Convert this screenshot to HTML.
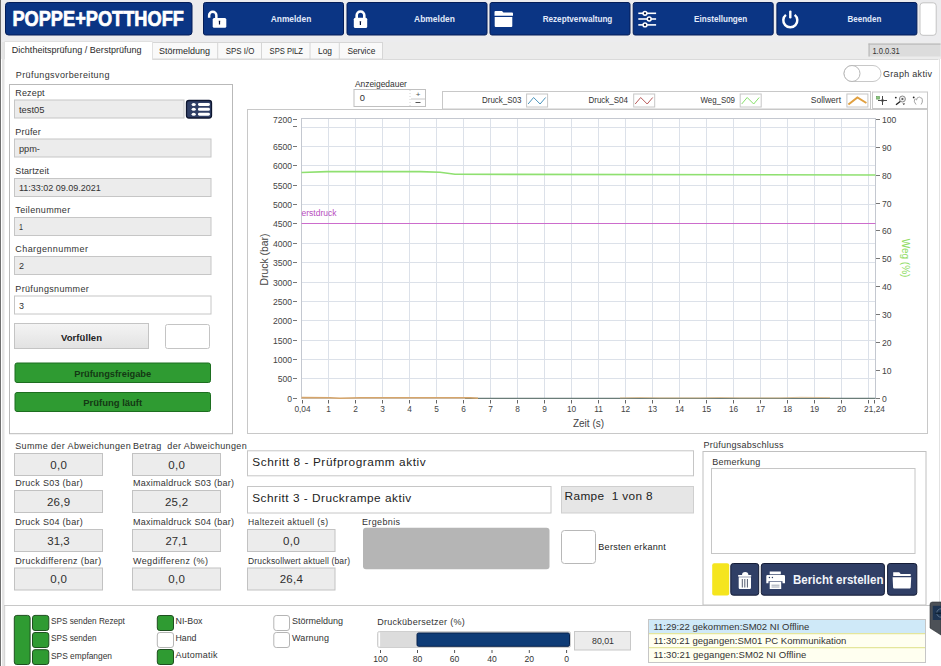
<!DOCTYPE html><html><head><meta charset="utf-8"><style>html,body{margin:0;padding:0;background:#fff;overflow:hidden}svg{display:block;font-family:"Liberation Sans",sans-serif}</style></head><body>
<svg width="941" height="666" viewBox="0 0 941 666">
<rect x="0" y="0" width="941" height="666" fill="#ffffff" />
<rect x="0" y="0" width="941" height="42" fill="#ececee" />
<rect x="0" y="42" width="941" height="17" fill="#ececec" />
<rect x="0" y="0" width="1" height="666" fill="#6f6f6f" />
<rect x="2" y="42" width="2.5" height="624" fill="#e4e4e4" />
<rect x="939" y="59" width="1" height="546" fill="#e2e2e2" />
<rect x="5.5" y="2.5" width="186.5" height="32.5" fill="#0b3584" stroke="#041d58" stroke-width="1" rx="3" />
<text x="12.4" y="26.3" font-size="21.5" fill="#ffffff" font-weight="bold" textLength="171.5" lengthAdjust="spacingAndGlyphs" stroke="#fff" stroke-width="0.7">POPPE+POTTHOFF</text>
<rect x="203.5" y="2.5" width="140" height="32.5" fill="#0b3584" stroke="#041d58" stroke-width="1" rx="2" />
<text x="291.0" y="21.5" font-size="9.6" fill="#e2eafa" font-weight="bold" text-anchor="middle" textLength="40.6" lengthAdjust="spacingAndGlyphs" >Anmelden</text>
<rect x="347.0" y="2.5" width="140" height="32.5" fill="#0b3584" stroke="#041d58" stroke-width="1" rx="2" />
<text x="434.5" y="21.5" font-size="9.6" fill="#e2eafa" font-weight="bold" text-anchor="middle" textLength="40.8" lengthAdjust="spacingAndGlyphs" >Abmelden</text>
<rect x="490.0" y="2.5" width="140" height="32.5" fill="#0b3584" stroke="#041d58" stroke-width="1" rx="2" />
<text x="577.5" y="21.5" font-size="9.6" fill="#e2eafa" font-weight="bold" text-anchor="middle" textLength="69.7" lengthAdjust="spacingAndGlyphs" >Rezeptverwaltung</text>
<rect x="633.2" y="2.5" width="140" height="32.5" fill="#0b3584" stroke="#041d58" stroke-width="1" rx="2" />
<text x="720.7" y="21.5" font-size="9.6" fill="#e2eafa" font-weight="bold" text-anchor="middle" textLength="53.2" lengthAdjust="spacingAndGlyphs" >Einstellungen</text>
<rect x="776.9" y="2.5" width="140" height="32.5" fill="#0b3584" stroke="#041d58" stroke-width="1" rx="2" />
<text x="864.4" y="21.5" font-size="9.6" fill="#e2eafa" font-weight="bold" text-anchor="middle" textLength="33.8" lengthAdjust="spacingAndGlyphs" >Beenden</text>
<path d="M209.15 17.8 V15.35 a3.6 3.6 0 0 1 7.2 0 V18.5" fill="none" stroke="#fff" stroke-width="2.5"/>
<rect x="212.7" y="18" width="13.6" height="9.7" fill="#ffffff" rx="1.5" />
<path d="M218.7 20.8 h1.6 l-0.2 1.4 v2.3 h-1.2 v-2.3 z" fill="#02103a"/>
<path d="M356.7 18.5 V15.3 a3.8 3.8 0 0 1 7.6 0 V18.5" fill="none" stroke="#fff" stroke-width="2.6"/>
<rect x="353.8" y="17.8" width="13.4" height="10.3" fill="#ffffff" rx="1.5" />
<path d="M359.6 21.3 h1.6 l-0.2 1.4 v2.2 h-1.2 v-2.2 z" fill="#02103a"/>
<path d="M495.5 11 h6.5 l1.4 1.5 h8.6 a1 1 0 0 1 1 1 v2.2 h-18.5 v-3.7 a1 1 0 0 1 1 -1 z" fill="#fff"/>
<path d="M494.7 17 h17.6 v9 a1 1 0 0 1 -1 1 h-15.6 a1 1 0 0 1 -1 -1 z" fill="#fff"/>
<line x1="638.3" y1="13.3" x2="656.1" y2="13.3" stroke="#fff" stroke-width="1.6" />
<circle cx="645" cy="13.3" r="1.9" fill="#02103a" stroke="#fff" stroke-width="1.5"/>
<line x1="638.3" y1="19.0" x2="656.1" y2="19.0" stroke="#fff" stroke-width="1.6" />
<circle cx="649.2" cy="19.0" r="1.9" fill="#02103a" stroke="#fff" stroke-width="1.5"/>
<line x1="638.3" y1="24.9" x2="656.1" y2="24.9" stroke="#fff" stroke-width="1.6" />
<circle cx="645" cy="24.9" r="1.9" fill="#02103a" stroke="#fff" stroke-width="1.5"/>
<path d="M785.9 14.9 a7 7 0 1 0 8.8 0" fill="none" stroke="#fff" stroke-width="2.5" stroke-linecap="butt"/>
<line x1="790.3" y1="11.6" x2="790.3" y2="17.2" stroke="#fff" stroke-width="2.4" stroke-linecap="round"/>
<rect x="920" y="2.8" width="16.2" height="32.5" fill="#ffffff" stroke="#c4c4c4" stroke-width="1" rx="3" />
<rect x="152.5" y="42.5" width="230" height="16.5" fill="#f9f9f9" stroke="#d6d6d6" stroke-width="1" />
<line x1="217.7" y1="43" x2="217.7" y2="59" stroke="#d6d6d6" stroke-width="1" />
<line x1="261.5" y1="43" x2="261.5" y2="59" stroke="#d6d6d6" stroke-width="1" />
<line x1="310" y1="43" x2="310" y2="59" stroke="#d6d6d6" stroke-width="1" />
<line x1="339.3" y1="43" x2="339.3" y2="59" stroke="#d6d6d6" stroke-width="1" />
<path d="M4.5 59.5 V41.5 H152.5 V59.5" fill="#ffffff" stroke="#e0e0e0" stroke-width="1"/>
<line x1="152.5" y1="59.5" x2="938.5" y2="59.5" stroke="#dadada" stroke-width="1" />
<text x="11.8" y="52.7" font-size="9" fill="#2a2a2a" textLength="129.8" lengthAdjust="spacing" >Dichtheitsprüfung / Berstprüfung</text>
<text x="159.1" y="54" font-size="9" fill="#2a2a2a" textLength="51" lengthAdjust="spacingAndGlyphs" >Störmeldung</text>
<text x="225.8" y="54" font-size="9" fill="#2a2a2a" textLength="28.6" lengthAdjust="spacingAndGlyphs" >SPS I/O</text>
<text x="269.6" y="54" font-size="9" fill="#2a2a2a" textLength="33.4" lengthAdjust="spacingAndGlyphs" >SPS PILZ</text>
<text x="318" y="54" font-size="9" fill="#2a2a2a" textLength="14" lengthAdjust="spacingAndGlyphs" >Log</text>
<text x="347.4" y="54" font-size="9" fill="#2a2a2a" textLength="27.9" lengthAdjust="spacingAndGlyphs" >Service</text>
<rect x="868.5" y="43.5" width="72" height="13" fill="#dcdcdc" />
<rect x="868.5" y="43.5" width="72" height="1.2" fill="#b9b9b9" />
<rect x="868.5" y="43.5" width="1.2" height="13" fill="#b9b9b9" />
<text x="872.4" y="54" font-size="9" fill="#333" textLength="27.4" lengthAdjust="spacingAndGlyphs" >1.0.0.31</text>
<text x="15.8" y="77.8" font-size="9" fill="#333" textLength="93.6" lengthAdjust="spacing" >Prüfungsvorbereitung</text>
<rect x="9.5" y="84.5" width="223" height="349.2" fill="#ffffff" stroke="#b9b9b9" stroke-width="1" />
<text x="15.3" y="95.5" font-size="9" fill="#333" textLength="29.3" lengthAdjust="spacing" >Rezept</text>
<rect x="14.5" y="100.0" width="169.5" height="18" fill="#ececec" stroke="#c6c6c6" stroke-width="1" />
<text x="18.9" y="112.7" font-size="9.6" fill="#333" textLength="25.5" lengthAdjust="spacingAndGlyphs" >test05</text>
<text x="15.3" y="134.5" font-size="9" fill="#333" textLength="25.5" lengthAdjust="spacing" >Prüfer</text>
<rect x="14.5" y="139.0" width="196.5" height="18" fill="#ececec" stroke="#c6c6c6" stroke-width="1" />
<text x="18.9" y="151.7" font-size="9.6" fill="#333" textLength="21" lengthAdjust="spacingAndGlyphs" >ppm-</text>
<text x="15.3" y="174" font-size="9" fill="#333" textLength="33.7" lengthAdjust="spacing" >Startzeit</text>
<rect x="14.5" y="178.5" width="196.5" height="18" fill="#ececec" stroke="#c6c6c6" stroke-width="1" />
<text x="18.9" y="191.2" font-size="9.6" fill="#333" textLength="82" lengthAdjust="spacingAndGlyphs" >11:33:02 09.09.2021</text>
<text x="15.3" y="213" font-size="9" fill="#333" textLength="54.9" lengthAdjust="spacing" >Teilenummer</text>
<rect x="14.5" y="217.5" width="196.5" height="18" fill="#ececec" stroke="#c6c6c6" stroke-width="1" />
<text x="18.9" y="230.2" font-size="9.6" fill="#333" textLength="4" lengthAdjust="spacingAndGlyphs" >1</text>
<text x="15.3" y="252" font-size="9" fill="#333" textLength="72.6" lengthAdjust="spacing" >Chargennummer</text>
<rect x="14.5" y="256.5" width="196.5" height="18" fill="#ececec" stroke="#c6c6c6" stroke-width="1" />
<text x="18.9" y="269.2" font-size="9.6" fill="#333" textLength="5" lengthAdjust="spacingAndGlyphs" >2</text>
<text x="15.3" y="291.5" font-size="9" fill="#333" textLength="73.5" lengthAdjust="spacing" >Prüfungsnummer</text>
<rect x="14.5" y="296.0" width="196.5" height="18" fill="#ffffff" stroke="#c6c6c6" stroke-width="1" />
<text x="18.9" y="308.7" font-size="9.6" fill="#333" textLength="5" lengthAdjust="spacingAndGlyphs" >3</text>
<rect x="186.5" y="100.5" width="25" height="17.5" fill="#303f66" stroke="#0e1630" stroke-width="1.3" rx="2.5" />
<ellipse cx="193.7" cy="104.4" rx="2.1" ry="1.5" fill="#fff"/>
<rect x="198" y="102.9" width="11.9" height="3" fill="#ffffff" rx="1.4" />
<ellipse cx="193.7" cy="109.3" rx="2.1" ry="1.5" fill="#fff"/>
<rect x="198" y="107.8" width="11.9" height="3" fill="#ffffff" rx="1.4" />
<ellipse cx="193.7" cy="114.2" rx="2.1" ry="1.5" fill="#fff"/>
<rect x="198" y="112.7" width="11.9" height="3" fill="#ffffff" rx="1.4" />
<defs><linearGradient id="gv" x1="0" y1="0" x2="0" y2="1"><stop offset="0" stop-color="#f4f4f4"/><stop offset="1" stop-color="#e2e2e2"/></linearGradient></defs>
<rect x="14.5" y="323.5" width="134" height="25" fill="url(#gv)" stroke="#c4c4c4" stroke-width="1" />
<text x="81.5" y="340.5" font-size="9.5" fill="#222" font-weight="bold" text-anchor="middle" textLength="41" lengthAdjust="spacing" >Vorfüllen</text>
<rect x="165.5" y="324.5" width="44" height="24" fill="#ffffff" stroke="#c4c4c4" stroke-width="1" rx="2" />
<rect x="15" y="363" width="195.5" height="19.5" fill="#2f9b32" stroke="#1d6e20" stroke-width="1" rx="2" />
<text x="112.7" y="376.6" font-size="9.5" fill="#143814" font-weight="bold" text-anchor="middle" textLength="77" lengthAdjust="spacingAndGlyphs" >Prüfungsfreigabe</text>
<rect x="15" y="392.5" width="195.5" height="19" fill="#2f9b32" stroke="#1d6e20" stroke-width="1" rx="2" />
<text x="112.7" y="405.8" font-size="9.5" fill="#143814" font-weight="bold" text-anchor="middle" textLength="59" lengthAdjust="spacingAndGlyphs" >Prüfung läuft</text>
<text x="354.9" y="87.3" font-size="9" fill="#333" textLength="52" lengthAdjust="spacingAndGlyphs" >Anzeigedauer</text>
<rect x="354" y="89.5" width="71.5" height="17" fill="#ffffff" stroke="#c0c0c0" stroke-width="1" />
<line x1="410" y1="90" x2="410" y2="106.5" stroke="#d0d0d0" stroke-width="1" stroke-dasharray="1 2"/>
<line x1="411" y1="99" x2="425" y2="99" stroke="#c8c8c8" stroke-width="1" />
<text x="359.8" y="101.3" font-size="9.3" fill="#333" >0</text>
<text x="418" y="97" font-size="8" fill="#555" text-anchor="middle" >+</text>
<line x1="415.5" y1="102.5" x2="420.5" y2="102.5" stroke="#555" stroke-width="1" />
<rect x="442.5" y="91.5" width="428" height="17.5" fill="#ffffff" stroke="#c8c8c8" stroke-width="1" />
<text x="482" y="103.3" font-size="9" fill="#333" textLength="39.4" lengthAdjust="spacingAndGlyphs" >Druck_S03</text>
<rect x="526.6" y="94" width="21" height="13" fill="#ffffff" stroke="#c6c6c6" stroke-width="1" />
<polyline points="528.1,104 533.6,97.5 540.1,104 545.6,97.5" fill="none" stroke="#4a94bc" stroke-width="1"/>
<text x="588.5" y="103.3" font-size="9" fill="#333" textLength="39.5" lengthAdjust="spacingAndGlyphs" >Druck_S04</text>
<rect x="633.7" y="94" width="21" height="13" fill="#ffffff" stroke="#c6c6c6" stroke-width="1" />
<polyline points="635.2,104 640.7,97.5 647.2,104 652.7,97.5" fill="none" stroke="#b85a5a" stroke-width="1"/>
<text x="700.5" y="103.3" font-size="9" fill="#333" textLength="34.5" lengthAdjust="spacingAndGlyphs" >Weg_S09</text>
<rect x="740.2" y="94" width="21" height="13" fill="#ffffff" stroke="#c6c6c6" stroke-width="1" />
<polyline points="741.7,104 747.2,97.5 753.7,104 759.2,97.5" fill="none" stroke="#86e06a" stroke-width="1"/>
<text x="810.8" y="103.3" font-size="9" fill="#333" textLength="30.2" lengthAdjust="spacingAndGlyphs" >Sollwert</text>
<rect x="846.9" y="94" width="21" height="13" fill="#ffffff" stroke="#c6c6c6" stroke-width="1" />
<polyline points="848.4,104.5 857.4,97.5 866.4,103" fill="none" stroke="#e0a040" stroke-width="2"/>
<rect x="872.5" y="92" width="55" height="16.5" fill="#ffffff" stroke="#c8c8c8" stroke-width="1" />
<rect x="876.5" y="96.5" width="3" height="2.6" fill="#8cc67e" stroke="#5a9a50" stroke-width="0.6" />
<line x1="878" y1="100.5" x2="887" y2="100.5" stroke="#333" stroke-width="0.9" />
<line x1="882.5" y1="96" x2="882.5" y2="105" stroke="#333" stroke-width="0.9" />
<rect x="881.7" y="99.7" width="1.6" height="1.6" fill="#ffffff" stroke="#333" stroke-width="0.6" />
<circle cx="902.4" cy="99" r="3" fill="#eee" stroke="#888" stroke-width="1"/><circle cx="902.4" cy="99" r="1.1" fill="#555"/><line x1="900.2" y1="101.4" x2="896" y2="104.8" stroke="#222" stroke-width="1.3"/><circle cx="895.8" cy="97.6" r="0.9" fill="#222"/><path d="M902.5 103.5 h2.6 l-1.3 1.6z" fill="#222"/>
<path d="M916 104.5 q-2.5 -3 -1.5 -5 q1 -1 2 0.5 q0.5 -3 2 -2.6 q1.2 -0.8 2.2 0.4 q1.4 0 1.6 1.5 q0.6 3 -1.2 5.2" fill="none" stroke="#999" stroke-width="0.9"/><circle cx="913.7" cy="97.4" r="0.9" fill="#222"/>
<rect x="844" y="65.5" width="37" height="16" fill="#ffffff" stroke="#c8c8c8" stroke-width="1" rx="8" />
<circle cx="852" cy="73.5" r="8" fill="#ffffff" stroke="#b8b8b8" stroke-width="1"/>
<text x="883" y="77.3" font-size="9" fill="#333" textLength="49" lengthAdjust="spacing" >Graph aktiv</text>
<rect x="247.5" y="109.5" width="680" height="324" fill="#ffffff" stroke="#c8c8c8" stroke-width="1" />
<line x1="301.5" y1="378.5" x2="875.5" y2="378.5" stroke="#dce1e9" stroke-width="1" />
<line x1="301.5" y1="359.5" x2="875.5" y2="359.5" stroke="#dce1e9" stroke-width="1" />
<line x1="301.5" y1="340.5" x2="875.5" y2="340.5" stroke="#dce1e9" stroke-width="1" />
<line x1="301.5" y1="320.5" x2="875.5" y2="320.5" stroke="#dce1e9" stroke-width="1" />
<line x1="301.5" y1="301.5" x2="875.5" y2="301.5" stroke="#dce1e9" stroke-width="1" />
<line x1="301.5" y1="282.5" x2="875.5" y2="282.5" stroke="#dce1e9" stroke-width="1" />
<line x1="301.5" y1="262.5" x2="875.5" y2="262.5" stroke="#dce1e9" stroke-width="1" />
<line x1="301.5" y1="243.5" x2="875.5" y2="243.5" stroke="#dce1e9" stroke-width="1" />
<line x1="301.5" y1="223.5" x2="875.5" y2="223.5" stroke="#dce1e9" stroke-width="1" />
<line x1="301.5" y1="204.5" x2="875.5" y2="204.5" stroke="#dce1e9" stroke-width="1" />
<line x1="301.5" y1="185.5" x2="875.5" y2="185.5" stroke="#dce1e9" stroke-width="1" />
<line x1="301.5" y1="165.5" x2="875.5" y2="165.5" stroke="#dce1e9" stroke-width="1" />
<line x1="301.5" y1="146.5" x2="875.5" y2="146.5" stroke="#dce1e9" stroke-width="1" />
<line x1="301.5" y1="127.5" x2="875.5" y2="127.5" stroke="#dce1e9" stroke-width="1" />
<line x1="328.5" y1="118.5" x2="328.5" y2="398.5" stroke="#dce1e9" stroke-width="1" />
<line x1="355.5" y1="118.5" x2="355.5" y2="398.5" stroke="#dce1e9" stroke-width="1" />
<line x1="382.5" y1="118.5" x2="382.5" y2="398.5" stroke="#dce1e9" stroke-width="1" />
<line x1="409.5" y1="118.5" x2="409.5" y2="398.5" stroke="#dce1e9" stroke-width="1" />
<line x1="436.5" y1="118.5" x2="436.5" y2="398.5" stroke="#dce1e9" stroke-width="1" />
<line x1="463.5" y1="118.5" x2="463.5" y2="398.5" stroke="#dce1e9" stroke-width="1" />
<line x1="490.5" y1="118.5" x2="490.5" y2="398.5" stroke="#dce1e9" stroke-width="1" />
<line x1="517.5" y1="118.5" x2="517.5" y2="398.5" stroke="#dce1e9" stroke-width="1" />
<line x1="544.5" y1="118.5" x2="544.5" y2="398.5" stroke="#dce1e9" stroke-width="1" />
<line x1="571.5" y1="118.5" x2="571.5" y2="398.5" stroke="#dce1e9" stroke-width="1" />
<line x1="598.5" y1="118.5" x2="598.5" y2="398.5" stroke="#dce1e9" stroke-width="1" />
<line x1="625.5" y1="118.5" x2="625.5" y2="398.5" stroke="#dce1e9" stroke-width="1" />
<line x1="652.5" y1="118.5" x2="652.5" y2="398.5" stroke="#dce1e9" stroke-width="1" />
<line x1="679.5" y1="118.5" x2="679.5" y2="398.5" stroke="#dce1e9" stroke-width="1" />
<line x1="706.5" y1="118.5" x2="706.5" y2="398.5" stroke="#dce1e9" stroke-width="1" />
<line x1="733.5" y1="118.5" x2="733.5" y2="398.5" stroke="#dce1e9" stroke-width="1" />
<line x1="760.5" y1="118.5" x2="760.5" y2="398.5" stroke="#dce1e9" stroke-width="1" />
<line x1="787.5" y1="118.5" x2="787.5" y2="398.5" stroke="#dce1e9" stroke-width="1" />
<line x1="814.5" y1="118.5" x2="814.5" y2="398.5" stroke="#dce1e9" stroke-width="1" />
<line x1="841.5" y1="118.5" x2="841.5" y2="398.5" stroke="#dce1e9" stroke-width="1" />
<line x1="868.5" y1="118.5" x2="868.5" y2="398.5" stroke="#dce1e9" stroke-width="1" />
<rect x="301.5" y="118.5" width="574.0" height="280.0" fill="none" stroke="#c4c8d0" stroke-width="1" />
<line x1="293" y1="398.5" x2="297" y2="398.5" stroke="#777" stroke-width="1" />
<text x="292" y="401.5" font-size="8.6" fill="#444" text-anchor="end" >0</text>
<line x1="293" y1="378.5" x2="297" y2="378.5" stroke="#777" stroke-width="1" />
<text x="292" y="381.5" font-size="8.6" fill="#444" text-anchor="end" >500</text>
<line x1="293" y1="359.5" x2="297" y2="359.5" stroke="#777" stroke-width="1" />
<text x="292" y="362.5" font-size="8.6" fill="#444" text-anchor="end" >1000</text>
<line x1="293" y1="340.5" x2="297" y2="340.5" stroke="#777" stroke-width="1" />
<text x="292" y="343.5" font-size="8.6" fill="#444" text-anchor="end" >1500</text>
<line x1="293" y1="320.5" x2="297" y2="320.5" stroke="#777" stroke-width="1" />
<text x="292" y="323.5" font-size="8.6" fill="#444" text-anchor="end" >2000</text>
<line x1="293" y1="301.5" x2="297" y2="301.5" stroke="#777" stroke-width="1" />
<text x="292" y="304.5" font-size="8.6" fill="#444" text-anchor="end" >2500</text>
<line x1="293" y1="282.5" x2="297" y2="282.5" stroke="#777" stroke-width="1" />
<text x="292" y="285.5" font-size="8.6" fill="#444" text-anchor="end" >3000</text>
<line x1="293" y1="262.5" x2="297" y2="262.5" stroke="#777" stroke-width="1" />
<text x="292" y="265.5" font-size="8.6" fill="#444" text-anchor="end" >3500</text>
<line x1="293" y1="243.5" x2="297" y2="243.5" stroke="#777" stroke-width="1" />
<text x="292" y="246.5" font-size="8.6" fill="#444" text-anchor="end" >4000</text>
<line x1="293" y1="223.5" x2="297" y2="223.5" stroke="#777" stroke-width="1" />
<text x="292" y="226.5" font-size="8.6" fill="#444" text-anchor="end" >4500</text>
<line x1="293" y1="204.5" x2="297" y2="204.5" stroke="#777" stroke-width="1" />
<text x="292" y="207.5" font-size="8.6" fill="#444" text-anchor="end" >5000</text>
<line x1="293" y1="185.5" x2="297" y2="185.5" stroke="#777" stroke-width="1" />
<text x="292" y="188.5" font-size="8.6" fill="#444" text-anchor="end" >5500</text>
<line x1="293" y1="165.5" x2="297" y2="165.5" stroke="#777" stroke-width="1" />
<text x="292" y="168.5" font-size="8.6" fill="#444" text-anchor="end" >6000</text>
<line x1="293" y1="146.5" x2="297" y2="146.5" stroke="#777" stroke-width="1" />
<text x="292" y="149.5" font-size="8.6" fill="#444" text-anchor="end" >6500</text>
<line x1="293" y1="119.5" x2="297" y2="119.5" stroke="#777" stroke-width="1" />
<text x="292" y="122.5" font-size="8.6" fill="#444" text-anchor="end" >7200</text>
<line x1="293" y1="126.5" x2="297" y2="126.5" stroke="#777" stroke-width="1" />
<line x1="876" y1="398.5" x2="880" y2="398.5" stroke="#777" stroke-width="1" />
<text x="882" y="401.5" font-size="8.6" fill="#444" >0</text>
<line x1="876" y1="370.5" x2="880" y2="370.5" stroke="#777" stroke-width="1" />
<text x="882" y="373.5" font-size="8.6" fill="#444" >10</text>
<line x1="876" y1="342.5" x2="880" y2="342.5" stroke="#777" stroke-width="1" />
<text x="882" y="345.5" font-size="8.6" fill="#444" >20</text>
<line x1="876" y1="314.5" x2="880" y2="314.5" stroke="#777" stroke-width="1" />
<text x="882" y="317.5" font-size="8.6" fill="#444" >30</text>
<line x1="876" y1="286.5" x2="880" y2="286.5" stroke="#777" stroke-width="1" />
<text x="882" y="289.5" font-size="8.6" fill="#444" >40</text>
<line x1="876" y1="258.5" x2="880" y2="258.5" stroke="#777" stroke-width="1" />
<text x="882" y="261.5" font-size="8.6" fill="#444" >50</text>
<line x1="876" y1="230.5" x2="880" y2="230.5" stroke="#777" stroke-width="1" />
<text x="882" y="233.5" font-size="8.6" fill="#444" >60</text>
<line x1="876" y1="203.5" x2="880" y2="203.5" stroke="#777" stroke-width="1" />
<text x="882" y="206.5" font-size="8.6" fill="#444" >70</text>
<line x1="876" y1="175.5" x2="880" y2="175.5" stroke="#777" stroke-width="1" />
<text x="882" y="178.5" font-size="8.6" fill="#444" >80</text>
<line x1="876" y1="147.5" x2="880" y2="147.5" stroke="#777" stroke-width="1" />
<text x="882" y="150.5" font-size="8.6" fill="#444" >90</text>
<line x1="876" y1="119.5" x2="880" y2="119.5" stroke="#777" stroke-width="1" />
<text x="882" y="122.5" font-size="8.6" fill="#444" >100</text>
<line x1="302.5" y1="400" x2="302.5" y2="403.5" stroke="#666" stroke-width="1" />
<text x="302.5" y="412" font-size="8.3" fill="#444" text-anchor="middle" >0,04</text>
<line x1="328.5" y1="400" x2="328.5" y2="403.5" stroke="#666" stroke-width="1" />
<text x="328.5" y="412" font-size="8.3" fill="#444" text-anchor="middle" >1</text>
<line x1="355.5" y1="400" x2="355.5" y2="403.5" stroke="#666" stroke-width="1" />
<text x="355.5" y="412" font-size="8.3" fill="#444" text-anchor="middle" >2</text>
<line x1="382.5" y1="400" x2="382.5" y2="403.5" stroke="#666" stroke-width="1" />
<text x="382.5" y="412" font-size="8.3" fill="#444" text-anchor="middle" >3</text>
<line x1="409.5" y1="400" x2="409.5" y2="403.5" stroke="#666" stroke-width="1" />
<text x="409.5" y="412" font-size="8.3" fill="#444" text-anchor="middle" >4</text>
<line x1="436.5" y1="400" x2="436.5" y2="403.5" stroke="#666" stroke-width="1" />
<text x="436.5" y="412" font-size="8.3" fill="#444" text-anchor="middle" >5</text>
<line x1="463.5" y1="400" x2="463.5" y2="403.5" stroke="#666" stroke-width="1" />
<text x="463.5" y="412" font-size="8.3" fill="#444" text-anchor="middle" >6</text>
<line x1="490.5" y1="400" x2="490.5" y2="403.5" stroke="#666" stroke-width="1" />
<text x="490.5" y="412" font-size="8.3" fill="#444" text-anchor="middle" >7</text>
<line x1="517.5" y1="400" x2="517.5" y2="403.5" stroke="#666" stroke-width="1" />
<text x="517.5" y="412" font-size="8.3" fill="#444" text-anchor="middle" >8</text>
<line x1="544.5" y1="400" x2="544.5" y2="403.5" stroke="#666" stroke-width="1" />
<text x="544.5" y="412" font-size="8.3" fill="#444" text-anchor="middle" >9</text>
<line x1="571.5" y1="400" x2="571.5" y2="403.5" stroke="#666" stroke-width="1" />
<text x="571.5" y="412" font-size="8.3" fill="#444" text-anchor="middle" >10</text>
<line x1="598.5" y1="400" x2="598.5" y2="403.5" stroke="#666" stroke-width="1" />
<text x="598.5" y="412" font-size="8.3" fill="#444" text-anchor="middle" >11</text>
<line x1="625.5" y1="400" x2="625.5" y2="403.5" stroke="#666" stroke-width="1" />
<text x="625.5" y="412" font-size="8.3" fill="#444" text-anchor="middle" >12</text>
<line x1="652.5" y1="400" x2="652.5" y2="403.5" stroke="#666" stroke-width="1" />
<text x="652.5" y="412" font-size="8.3" fill="#444" text-anchor="middle" >13</text>
<line x1="679.5" y1="400" x2="679.5" y2="403.5" stroke="#666" stroke-width="1" />
<text x="679.5" y="412" font-size="8.3" fill="#444" text-anchor="middle" >14</text>
<line x1="706.5" y1="400" x2="706.5" y2="403.5" stroke="#666" stroke-width="1" />
<text x="706.5" y="412" font-size="8.3" fill="#444" text-anchor="middle" >15</text>
<line x1="733.5" y1="400" x2="733.5" y2="403.5" stroke="#666" stroke-width="1" />
<text x="733.5" y="412" font-size="8.3" fill="#444" text-anchor="middle" >16</text>
<line x1="760.5" y1="400" x2="760.5" y2="403.5" stroke="#666" stroke-width="1" />
<text x="760.5" y="412" font-size="8.3" fill="#444" text-anchor="middle" >17</text>
<line x1="787.5" y1="400" x2="787.5" y2="403.5" stroke="#666" stroke-width="1" />
<text x="787.5" y="412" font-size="8.3" fill="#444" text-anchor="middle" >18</text>
<line x1="814.5" y1="400" x2="814.5" y2="403.5" stroke="#666" stroke-width="1" />
<text x="814.5" y="412" font-size="8.3" fill="#444" text-anchor="middle" >19</text>
<line x1="841.5" y1="400" x2="841.5" y2="403.5" stroke="#666" stroke-width="1" />
<text x="841.5" y="412" font-size="8.3" fill="#444" text-anchor="middle" >20</text>
<line x1="868.5" y1="400" x2="868.5" y2="403.5" stroke="#666" stroke-width="1" />
<line x1="874.5" y1="400" x2="874.5" y2="403.5" stroke="#666" stroke-width="1" />
<text x="874.5" y="412" font-size="8.3" fill="#444" text-anchor="middle" >21,24</text>
<text x="588.5" y="427" font-size="10" fill="#444" text-anchor="middle" >Zeit (s)</text>
<text x="0" y="0" font-size="10.5" fill="#444" text-anchor="middle" textLength="52" lengthAdjust="spacingAndGlyphs" transform="translate(267.5,259.5) rotate(-90)">Druck (bar)</text>
<text x="0" y="0" font-size="10" fill="#8edc62" text-anchor="middle" transform="translate(902,258) rotate(90)">Weg (%)</text>
<polyline points="301.5,172.5 327,171.6 420,171.6 440,172.2 455,174.3 875.5,175" fill="none" stroke="#8fe070" stroke-width="1.6"/>
<line x1="301.5" y1="223.5" x2="875.5" y2="223.5" stroke="#cc6ccc" stroke-width="1" />
<text x="301.5" y="215.5" font-size="8.5" fill="#b84ec0" textLength="35" lengthAdjust="spacing" >erstdruck</text>
<line x1="465" y1="398.3" x2="875.5" y2="398.3" stroke="#6a7c78" stroke-width="1.3" />
<polyline points="301.5,397.6 330,397.8 340,398.3 360,397.8 470,397.8 478,398.3" fill="none" stroke="#d6a56a" stroke-width="1.6"/>
<polyline points="620,397.9 640,397.5 660,397.9 700,397.9 720,397.5 740,397.9 780,397.9 800,397.3 830,397.6" fill="none" stroke="#d9b27a" stroke-width="1" opacity="0.7"/>
<text x="15.2" y="449" font-size="9" fill="#333" textLength="115.5" lengthAdjust="spacing" >Summe der Abweichungen</text>
<text x="133" y="449" font-size="9" fill="#333" textLength="113.7" lengthAdjust="spacing" >Betrag  der Abweichungen</text>
<rect x="14.5" y="453.5" width="88" height="22" fill="#ececec" stroke="#c2c2c2" stroke-width="1" />
<text x="58.5" y="468.5" font-size="11.5" fill="#2e2e2e" text-anchor="middle" textLength="16.6" lengthAdjust="spacing" >0,0</text>
<rect x="132.5" y="453.5" width="88" height="22" fill="#ececec" stroke="#c2c2c2" stroke-width="1" />
<text x="176.5" y="468.5" font-size="11.5" fill="#2e2e2e" text-anchor="middle" textLength="16.6" lengthAdjust="spacing" >0,0</text>
<text x="15.2" y="486.3" font-size="9" fill="#333" textLength="67.5" lengthAdjust="spacing" >Druck S03 (bar)</text>
<text x="133" y="486.3" font-size="9" fill="#333" textLength="101" lengthAdjust="spacing" >Maximaldruck S03 (bar)</text>
<rect x="14.5" y="490.5" width="88" height="22" fill="#ececec" stroke="#c2c2c2" stroke-width="1" />
<text x="58.5" y="505.5" font-size="11.5" fill="#2e2e2e" text-anchor="middle" textLength="23.2" lengthAdjust="spacing" >26,9</text>
<rect x="132.5" y="490.5" width="88" height="22" fill="#ececec" stroke="#c2c2c2" stroke-width="1" />
<text x="176.5" y="505.5" font-size="11.5" fill="#2e2e2e" text-anchor="middle" textLength="23.2" lengthAdjust="spacing" >25,2</text>
<text x="15.2" y="525" font-size="9" fill="#333" textLength="67.5" lengthAdjust="spacing" >Druck S04 (bar)</text>
<text x="133" y="525" font-size="9" fill="#333" textLength="101" lengthAdjust="spacing" >Maximaldruck S04 (bar)</text>
<text x="248" y="525" font-size="8.5" fill="#333" textLength="80" lengthAdjust="spacing" >Haltezeit aktuell (s)</text>
<rect x="14.5" y="529.5" width="88" height="22" fill="#ececec" stroke="#c2c2c2" stroke-width="1" />
<text x="58.5" y="544.5" font-size="11.5" fill="#2e2e2e" text-anchor="middle" textLength="22.3" lengthAdjust="spacingAndGlyphs" >31,3</text>
<rect x="132.5" y="529.5" width="88" height="22" fill="#ececec" stroke="#c2c2c2" stroke-width="1" />
<text x="176.5" y="544.5" font-size="11.5" fill="#2e2e2e" text-anchor="middle" textLength="22" lengthAdjust="spacingAndGlyphs" >27,1</text>
<rect x="247.5" y="529.5" width="87.5" height="22" fill="#ececec" stroke="#c2c2c2" stroke-width="1" />
<text x="291.25" y="544.5" font-size="11.5" fill="#2e2e2e" text-anchor="middle" textLength="16.6" lengthAdjust="spacing" >0,0</text>
<text x="15.2" y="564" font-size="9" fill="#333" textLength="86" lengthAdjust="spacing" >Druckdifferenz (bar)</text>
<text x="133" y="564" font-size="9" fill="#333" textLength="75" lengthAdjust="spacing" >Wegdifferenz (%)</text>
<text x="248" y="564" font-size="8.5" fill="#333" textLength="102" lengthAdjust="spacing" >Drucksollwert aktuell (bar)</text>
<rect x="14.5" y="568.0" width="88" height="22.0" fill="#ececec" stroke="#c2c2c2" stroke-width="1" />
<text x="58.5" y="583.0" font-size="11.5" fill="#2e2e2e" text-anchor="middle" textLength="16.6" lengthAdjust="spacing" >0,0</text>
<rect x="132.5" y="568.0" width="88" height="22.0" fill="#ececec" stroke="#c2c2c2" stroke-width="1" />
<text x="176.5" y="583.0" font-size="11.5" fill="#2e2e2e" text-anchor="middle" textLength="16.6" lengthAdjust="spacing" >0,0</text>
<rect x="247.5" y="568.0" width="87.5" height="22.0" fill="#ececec" stroke="#c2c2c2" stroke-width="1" />
<text x="291.25" y="583.0" font-size="11.5" fill="#2e2e2e" text-anchor="middle" textLength="23.2" lengthAdjust="spacing" >26,4</text>
<rect x="247.5" y="450.8" width="446" height="25" fill="#ffffff" stroke="#c6c6c6" stroke-width="1" />
<text x="252.2" y="466" font-size="11.8" fill="#222" textLength="173.5" lengthAdjust="spacing" >Schritt 8 - Prüfprogramm aktiv</text>
<rect x="247.5" y="486.5" width="303.5" height="26.5" fill="#ffffff" stroke="#c6c6c6" stroke-width="1" />
<text x="252.2" y="501.7" font-size="11.8" fill="#222" textLength="159" lengthAdjust="spacing" >Schritt 3 - Druckrampe aktiv</text>
<rect x="561.5" y="486.5" width="132" height="26.5" fill="#e6e6e6" stroke="#cfcfcf" stroke-width="1" />
<text x="564.6" y="500.4" font-size="11.8" fill="#222" textLength="88" lengthAdjust="spacing" >Rampe  1 von 8</text>
<text x="362" y="525" font-size="9" fill="#333" textLength="38" lengthAdjust="spacing" >Ergebnis</text>
<rect x="363" y="527.8" width="186.5" height="41.5" fill="#b5b5b5" rx="3" />
<rect x="561.5" y="530.5" width="34" height="33" fill="#ffffff" stroke="#b8b8b8" stroke-width="1" rx="3" />
<text x="598.3" y="550.3" font-size="9" fill="#222" textLength="67.5" lengthAdjust="spacing" >Bersten erkannt</text>
<text x="703.5" y="448" font-size="9" fill="#333" textLength="80" lengthAdjust="spacing" >Prüfungsabschluss</text>
<rect x="703" y="451.5" width="223" height="153.5" fill="#ffffff" stroke="#c0c0c0" stroke-width="1" />
<text x="712.2" y="465" font-size="9" fill="#333" textLength="48" lengthAdjust="spacing" >Bemerkung</text>
<rect x="711.5" y="468.5" width="203.5" height="85" fill="#ffffff" stroke="#c6c6c6" stroke-width="1" />
<rect x="712.2" y="563.2" width="17" height="32.2" fill="#f5e51e" rx="2" />
<rect x="730.8" y="563.5" width="27.9" height="31.7" fill="#303f66" stroke="#141c36" stroke-width="1" rx="2.5" />
<rect x="761.3" y="563.5" width="123.1" height="31.7" fill="#303f66" stroke="#141c36" stroke-width="1" rx="2.5" />
<rect x="887.6" y="563.5" width="29.2" height="31.7" fill="#303f66" stroke="#141c36" stroke-width="1" rx="2.5" />
<path d="M742 575 a3.2 3 0 0 1 6.4 0 z" fill="#fff"/>
<rect x="738" y="574.9" width="13.3" height="1.8" fill="#ffffff" rx="0.8" />
<path d="M738.7 577.2 h12.3 v10.6 a1.2 1.2 0 0 1 -1.2 1.2 h-9.9 a1.2 1.2 0 0 1 -1.2 -1.2 z" fill="#fff"/>
<line x1="742.3" y1="579" x2="742.3" y2="587.5" stroke="#555d70" stroke-width="1" />
<line x1="744.8" y1="579" x2="744.8" y2="587.5" stroke="#555d70" stroke-width="1" />
<line x1="747.4" y1="579" x2="747.4" y2="587.5" stroke="#555d70" stroke-width="1" />
<rect x="769.7" y="571.5" width="11.1" height="2.8" fill="#ffffff" />
<path d="M767.5 575 h16.3 a1.2 1.2 0 0 1 1.2 1.2 v7 h-2.5 v-2 h-14 v2 h-2.2 v-7 a1.2 1.2 0 0 1 1.2 -1.2 z" fill="#fff"/>
<circle cx="769.4" cy="577.5" r="0.7" fill="#2c3c62"/><circle cx="772.4" cy="577.5" r="0.7" fill="#2c3c62"/>
<rect x="769.7" y="581.8" width="11.5" height="7.2" fill="#ffffff" />
<line x1="771.5" y1="585.2" x2="779.5" y2="585.2" stroke="#8890a0" stroke-width="0.8" />
<line x1="771.5" y1="587" x2="779.5" y2="587" stroke="#8890a0" stroke-width="0.8" />
<text x="793" y="583.9" font-size="12.4" fill="#f2f4fa" font-weight="bold" textLength="90.5" lengthAdjust="spacingAndGlyphs" >Bericht erstellen</text>
<path d="M893.2 572.3 h6 l1.5 1.6 h10 v2.2 h-17.5 z" fill="#fff"/><path d="M892.6 577.3 h18.6 l-0.5 10.3 a0.8 0.8 0 0 1 -0.8 0.8 h-16 a0.8 0.8 0 0 1 -0.8 -0.8 z" fill="#fff"/>
<line x1="4" y1="605.5" x2="941" y2="605.5" stroke="#c8c8c8" stroke-width="1.2" />
<rect x="4" y="606" width="1.2" height="60" fill="#d6d6d6" />
<rect x="14.3" y="615.4" width="15.8" height="49.10000000000002" fill="#2f9b32" stroke="#1f4f20" stroke-width="1" rx="2.5" />
<rect x="32.5" y="615.4" width="16.299999999999997" height="15.100000000000023" fill="#2f9b32" stroke="#1f4f20" stroke-width="1" rx="2.5" />
<rect x="32.5" y="632.5" width="16.299999999999997" height="15" fill="#2f9b32" stroke="#1f4f20" stroke-width="1" rx="2.5" />
<rect x="32.5" y="649.7" width="16.299999999999997" height="14.799999999999955" fill="#2f9b32" stroke="#1f4f20" stroke-width="1" rx="2.5" />
<text x="51" y="624.2" font-size="9" fill="#333" textLength="73.9" lengthAdjust="spacingAndGlyphs" >SPS senden Rezept</text>
<text x="51" y="641.3" font-size="9" fill="#333" textLength="45.5" lengthAdjust="spacingAndGlyphs" >SPS senden</text>
<text x="51" y="658.5" font-size="9" fill="#333" textLength="61" lengthAdjust="spacingAndGlyphs" >SPS empfangen</text>
<rect x="157.3" y="615.5" width="16.19999999999999" height="15" fill="#2f9b32" stroke="#1f4f20" stroke-width="1" rx="2.5" />
<rect x="157.3" y="632.5" width="16.19999999999999" height="15" fill="#ffffff" stroke="#b5b5b5" stroke-width="1" rx="2.5" />
<rect x="157.3" y="649.5" width="16.19999999999999" height="15" fill="#2f9b32" stroke="#1f4f20" stroke-width="1" rx="2.5" />
<text x="175.5" y="624.2" font-size="9" fill="#333" textLength="27" lengthAdjust="spacingAndGlyphs" >NI-Box</text>
<text x="175.5" y="641.1" font-size="9" fill="#333" textLength="21" lengthAdjust="spacingAndGlyphs" >Hand</text>
<text x="175.5" y="658.3" font-size="9" fill="#333" textLength="42" lengthAdjust="spacing" >Automatik</text>
<rect x="273.8" y="615.5" width="15.699999999999989" height="15" fill="#ffffff" stroke="#b5b5b5" stroke-width="1" rx="2.5" />
<rect x="273.8" y="632.5" width="15.699999999999989" height="15" fill="#ffffff" stroke="#b5b5b5" stroke-width="1" rx="2.5" />
<text x="292" y="624.2" font-size="9" fill="#333" textLength="51" lengthAdjust="spacingAndGlyphs" >Störmeldung</text>
<text x="292" y="641.1" font-size="9" fill="#333" textLength="37" lengthAdjust="spacing" >Warnung</text>
<text x="377.2" y="625" font-size="9" fill="#333" textLength="87.5" lengthAdjust="spacing" >Druckübersetzer (%)</text>
<rect x="377.5" y="631.5" width="193" height="16" fill="#dcdcdc" stroke="#cfcfcf" stroke-width="1" rx="2" />
<rect x="378.5" y="632.5" width="1.6" height="14" fill="#ffffff" />
<rect x="417" y="633" width="152.5" height="13.3" fill="#0f3c77" stroke="#08224c" stroke-width="1" rx="1.5" />
<line x1="380.5" y1="650" x2="380.5" y2="653" stroke="#555" stroke-width="1" />
<text x="380.5" y="661.7" font-size="8.6" fill="#333" text-anchor="middle" >100</text>
<line x1="417.5" y1="650" x2="417.5" y2="653" stroke="#555" stroke-width="1" />
<text x="417.5" y="661.7" font-size="8.6" fill="#333" text-anchor="middle" >80</text>
<line x1="454.6" y1="650" x2="454.6" y2="653" stroke="#555" stroke-width="1" />
<text x="454.6" y="661.7" font-size="8.6" fill="#333" text-anchor="middle" >60</text>
<line x1="492" y1="650" x2="492" y2="653" stroke="#555" stroke-width="1" />
<text x="492" y="661.7" font-size="8.6" fill="#333" text-anchor="middle" >40</text>
<line x1="529.3" y1="650" x2="529.3" y2="653" stroke="#555" stroke-width="1" />
<text x="529.3" y="661.7" font-size="8.6" fill="#333" text-anchor="middle" >20</text>
<line x1="566.6" y1="650" x2="566.6" y2="653" stroke="#555" stroke-width="1" />
<text x="566.6" y="661.7" font-size="8.6" fill="#333" text-anchor="middle" >0</text>
<rect x="574.5" y="631.5" width="56" height="18.5" fill="#ececec" stroke="#c8c8c8" stroke-width="1" />
<text x="603" y="643.9" font-size="8.8" fill="#333" text-anchor="middle" textLength="22" lengthAdjust="spacingAndGlyphs" >80,01</text>
<rect x="648.5" y="619.5" width="277" height="43" fill="#fffff0" stroke="#c6c6c6" stroke-width="1" />
<rect x="649" y="620" width="276" height="13.2" fill="#cfe9f8" />
<line x1="649" y1="633.6" x2="925" y2="633.6" stroke="#e4e69c" stroke-width="1.2" />
<line x1="649" y1="647.6" x2="925" y2="647.6" stroke="#e4e69c" stroke-width="1.2" />
<text x="653.4" y="629.8" font-size="9.5" fill="#333" textLength="156" lengthAdjust="spacing" >11:29:22 gekommen:SM02 NI Offline</text>
<text x="653.4" y="643.6" font-size="9.5" fill="#333" textLength="193" lengthAdjust="spacing" >11:30:21 gegangen:SM01 PC Kommunikation</text>
<text x="653.4" y="657.6" font-size="9.5" fill="#333" textLength="153" lengthAdjust="spacing" >11:30:21 gegangen:SM02 NI Offline</text>
<path d="M932.5 602 h8.5 v33 l-11 -7 v-23.5 a2.5 2.5 0 0 1 2.5 -2.5 z" fill="#4d5157" stroke="#2c2f33" stroke-width="0.6"/>
<rect x="932.8" y="605.8" width="8.2" height="14.2" fill="#1d3452" />
<circle cx="941" cy="613" r="4.2" fill="none" stroke="#5a7088" stroke-width="1"/>
<line x1="935.5" y1="613.2" x2="941" y2="613.2" stroke="#0a1a2a" stroke-width="1.2" />
</svg></body></html>
